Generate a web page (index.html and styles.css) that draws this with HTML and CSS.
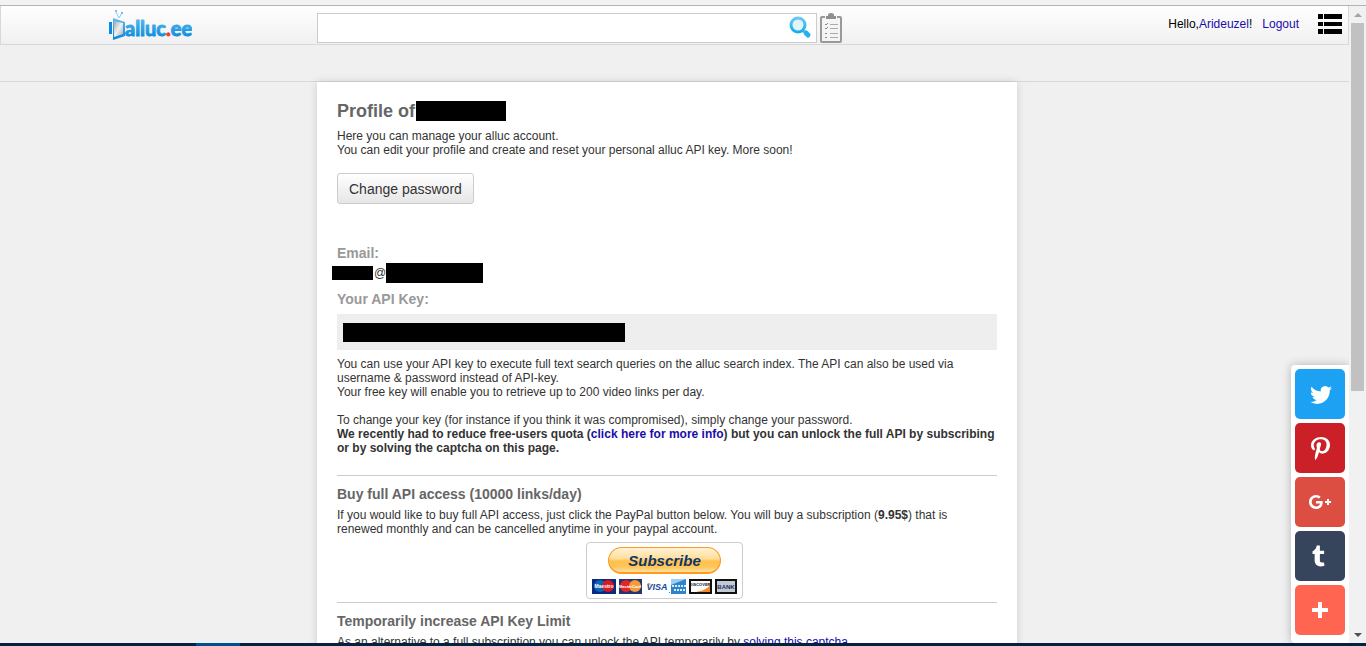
FILE: index.html
```html
<!DOCTYPE html>
<html lang="en">
<head>
<meta charset="UTF-8">
<meta name="viewport" content="width=device-width, initial-scale=1.0">
<title>alluc.ee - Profile</title>
<link rel="stylesheet" href="styles.css">
</head>
<body>

<div class="toolbar-edge"></div>

<div class="window">
    <div class="page">
        <header class="header">
            <a class="logo" href="#" aria-label="alluc.ee">
                <svg width="84" height="34" viewBox="0 0 84 34">
                    <defs>
                        <linearGradient id="blue" x1="0" y1="0" x2="0" y2="1">
                            <stop offset="0" stop-color="#5cc0f0"/>
                            <stop offset="1" stop-color="#0584da"/>
                        </linearGradient>
                        <linearGradient id="glass" x1="0" y1="0" x2="1" y2="1">
                            <stop offset="0" stop-color="#a4a8aa"/>
                            <stop offset="0.5" stop-color="#f0f0f0"/>
                            <stop offset="1" stop-color="#a5abaf"/>
                        </linearGradient>
                    </defs>
                    <path d="M1 14h3v12H1z" fill="#0a8be0"/>
                    <path d="M5 10l12 4v14L5 32z" fill="url(#blue)"/>
                    <path d="M6 13l9 2v11L6 29z" fill="url(#glass)"/>
                    <path d="M11 10L8 4M11 10l3-5" stroke="#8cc9ec" fill="none"/>
                    <circle cx="8" cy="3" r="1" fill="#45b0ea"/>
                    <circle cx="14" cy="5" r="1" fill="#45b0ea"/>
                    <text class="logo-text" x="17" y="28" fill="url(#blue)" stroke="url(#blue)">alluc<tspan fill="#f0402c" stroke="#f0402c">.</tspan>ee</text>
                </svg>
            </a>
            <form class="search">
                <div class="search-box">
                    <input type="text" class="search-input" aria-label="Search">
                    <button type="button" class="icon-button" aria-label="Search">
                        <svg width="24" height="24" viewBox="0 0 24 24">
                            <defs>
                                <linearGradient id="lens" x1="0" y1="0" x2="0" y2="1">
                                    <stop offset="0" stop-color="#6cc8f4"/>
                                    <stop offset="1" stop-color="#12aeea"/>
                                </linearGradient>
                            </defs>
                            <path d="M15 15l1 1" stroke="#9aa8b0" stroke-width="3"/>
                            <path d="M18 17l2 2" stroke="#1fb2ee" stroke-width="5" stroke-linecap="round"/>
                            <circle cx="10" cy="9" r="7" fill="#e4f3fa" stroke="url(#lens)" stroke-width="3"/>
                        </svg>
                    </button>
                </div>
                <button type="button" class="icon-button" aria-label="Lists">
                    <svg width="22" height="30" viewBox="0 0 22 30">
                        <rect x="1" y="4" width="20" height="25" rx="1" fill="#f4f4f4" stroke="#999" stroke-width="2"/>
                        <path d="M5 2h12v5H5z" fill="#f8f8f8"/>
                        <path d="M8 2a3 2 0 0 1 6 0v1h2v3H6V3h2z" fill="#8f8f8f"/>
                        <path d="M10 11.500h8M10 15.500h8M10 20.500h8M10 24.500h8" stroke="#aaa"/>
                        <path d="M5 11l1 1 2-2M5 15l1 1 2-2" stroke="#888" fill="none"/>
                        <path d="M5 20h2v1H5zM5 24h2v1H5z" fill="#888"/>
                    </svg>
                </button>
            </form>
            <nav class="user">
                <span>Hello,<a href="#">Arideuzel</a>!</span>
                <a href="#">Logout</a>
                <button type="button" class="icon-button menu" aria-label="Menu">
                    <svg width="24" height="20" viewBox="0 0 24 20">
                        <path d="M0 0h5v5H0zM6 0h18v5H6zM0 8h5v4H0zM6 8h18v4H6zM0 15h5v5H0zM6 15h18v5H6z"/>
                    </svg>
                </button>
            </nav>
        </header>
        <div class="subnav"></div>

        <main class="content">
            <section class="panel">
                <h1>Profile of<span class="redacted name"></span></h1>
                <p>Here you can manage your alluc account.<br>
                You can edit your profile and create and reset your personal alluc API key. More soon!</p>
                <button type="button" class="button">Change password</button>

                <h2 class="label">Email:</h2>
                <div class="email"><span class="redacted user-part"></span>@<span class="redacted domain-part"></span></div>
                <h2 class="label">Your API Key:</h2>
                <div class="api-key"><span class="redacted key"></span></div>
                <p>You can use your API key to execute full text search queries on the alluc search index. The API can also be used via username &amp; password instead of API-key.<br>
                Your free key will enable you to retrieve up to 200 video links per day.<br><br>
                To change your key (for instance if you think it was compromised), simply change your password.<br>
                <b>We recently had to reduce free-users quota (<a href="#">click here for more info</a>) but you can unlock the full API by subscribing or by solving the captcha on this page.</b></p>

                <hr class="first">
                <h2>Buy full API access (10000 links/day)</h2>
                <p>If you would like to buy full API access, just click the PayPal button below. You will buy a subscription (<b>9.95$</b>) that is<br>
                renewed monthly and can be cancelled anytime in your paypal account.</p>
                <button type="button" class="paypal">
                    <span class="subscribe">Subscribe</span>
                    <svg width="145" height="15" viewBox="0 0 145 15">
                        <rect width="24" height="15" fill="#0b2b80"/>
                        <circle cx="8" cy="7" r="6" fill="#0e65b0"/>
                        <circle cx="16" cy="7" r="6" fill="#d91920"/>
                        <text class="card" x="12" y="9" fill="#fff">Maestro</text>
                        <rect x="27" width="23" height="15" fill="#24356f"/>
                        <circle cx="34" cy="7" r="6" fill="#e1252b"/>
                        <circle cx="43" cy="7" r="6" fill="#f39a3b"/>
                        <text class="card small" x="38" y="9" fill="#fff">MasterCard</text>
                        <text class="visa" x="65" y="11" fill="#17479b">VISA</text>
                        <path d="M55 4h3l1 3z" fill="#f2a43a"/>
                        <rect x="79" width="15" height="15" fill="#2f83c9"/>
                        <path d="M79 0h15L79 6z" fill="#9ecdf0"/>
                        <path d="M80 7h14M82 11h12" stroke="#d5ebfa" stroke-width="2" stroke-dasharray="2 1"/>
                        <path d="M77 13h1v1h-1z" fill="#2f83c9"/>
                        <rect x="98" y="1" width="21" height="13" fill="#fff" stroke="#111" stroke-width="2"/>
                        <path d="M118 6v7h-14c6-1 11-3 14-7z" fill="#f08a2c"/>
                        <text class="card small" x="108" y="7" fill="#111">DISCOVER</text>
                        <rect x="124" y="1" width="20" height="13" fill="#c3c9d1" stroke="#111" stroke-width="2"/>
                        <text class="bank" x="134" y="10" fill="#17305f">BANK</text>
                    </svg>
                </button>

                <hr>
                <h2>Temporarily increase API Key Limit</h2>
                <p>As an alternative to a full subscription you can unlock the API temporarily by <a class="underlined" href="#">solving this captcha</a></p>
            </section>
        </main>

        <aside class="share">
            <a class="twitter" href="#" aria-label="Twitter"><svg viewBox="0 0 32 32"><path d="M27.996 10.116c-.81.36-1.68.602-2.592.71a4.526 4.526 0 0 0 1.984-2.496 9.037 9.037 0 0 1-2.866 1.095 4.513 4.513 0 0 0-7.69 4.116 12.81 12.81 0 0 1-9.3-4.715 4.49 4.49 0 0 0-.612 2.27 4.51 4.51 0 0 0 2.008 3.755 4.495 4.495 0 0 1-2.044-.564v.057a4.515 4.515 0 0 0 3.62 4.425 4.52 4.52 0 0 1-2.04.077 4.517 4.517 0 0 0 4.217 3.134 9.055 9.055 0 0 1-5.604 1.93A9.18 9.18 0 0 1 6 23.85a12.773 12.773 0 0 0 6.918 2.027c8.3 0 12.84-6.876 12.84-12.84 0-.195-.005-.39-.014-.583a9.172 9.172 0 0 0 2.252-2.336"/></svg></a>
            <a class="pinterest" href="#" aria-label="Pinterest"><svg viewBox="0 0 32 32"><path d="M7 13.252c0 1.81.772 4.45 2.895 5.045.074.014.178.04.252.04.49 0 .772-1.27.772-1.63 0-.428-1.174-1.34-1.174-3.123 0-3.705 3.028-6.33 6.947-6.33 3.37 0 5.863 1.782 5.863 5.058 0 2.446-1.054 7.035-4.468 7.035-1.232 0-2.286-.83-2.286-2.018 0-1.742 1.307-3.43 1.307-5.225 0-1.092-.67-1.977-1.916-1.977-1.692 0-2.732 1.77-2.732 3.165 0 .774.104 1.63.476 2.336-.683 2.736-2.08 6.814-2.08 9.633 0 .87.135 1.728.224 2.6l.134.137.207-.07c2.494-3.178 2.405-3.8 3.533-7.96.61 1.077 2.182 1.658 3.43 1.658 5.254 0 7.614-4.77 7.614-9.067C26 7.987 21.755 5 17.094 5 12.017 5 7 8.15 7 13.252z"/></svg></a>
            <a class="google" href="#" aria-label="Google+"><svg viewBox="0 0 32 32"><path d="M12 15v2.4h3.97c-.16 1.03-1.2 3.02-3.97 3.02-2.39 0-4.34-1.98-4.34-4.42s1.95-4.42 4.34-4.42c1.36 0 2.27.58 2.79 1.08l1.9-1.83C15.47 9.69 13.89 9 12 9c-3.87 0-7 3.13-7 7s3.13 7 7 7c4.04 0 6.72-2.84 6.72-6.84 0-.46-.05-.81-.11-1.16H12zm15 0h-2v-2h-2v2h-2v2h2v2h2v-2h2v-2z"/></svg></a>
            <a class="tumblr" href="#" aria-label="Tumblr"><svg viewBox="0 0 32 32"><path d="M19.59 22.176c-.392.186-1.14.348-1.695.362-1.682.045-2.008-1.18-2.022-2.07v-6.54h4.218v-3.18H15.89V5.403h-3.076c-.05 0-.138.044-.15.157-.18 1.636-.947 4.51-4.133 5.66v2.71h2.124v6.862c0 2.35 1.733 5.688 6.308 5.61 1.544-.028 3.258-.674 3.637-1.23l-1.01-2.996"/></svg></a>
            <a class="more" href="#" aria-label="More"><svg viewBox="0 0 32 32"><path d="M18 14V8h-4v6H8v4h6v6h4v-6h6v-4h-6z"/></svg></a>
        </aside>
    </div>

    <div class="scrollbar">
        <svg width="17" height="17" viewBox="0 0 17 17"><path d="M5 11l4-4 4 4z" fill="#a3a3a3"/></svg>
        <div class="track"><div class="thumb"></div></div>
        <svg width="17" height="17" viewBox="0 0 17 17"><path d="M5 7h8l-4 4z" fill="#505050"/></svg>
    </div>
</div>

<div class="taskbar"><div class="task"></div></div>

</body>
</html>
```

FILE: styles.css
```css
body {
    font-family: Arial, "Liberation Sans", sans-serif;
    font-size: 12px;
    line-height: 14px;
    color: #333;
    background-color: #f0f0f0;
    margin: 0;
    height: 100vh;
    display: flex;
    flex-direction: column;
    overflow: hidden;
}

a {
    color: #1a0dab;
    text-decoration: none;
}

svg {
    display: block;
}

.toolbar-edge {
    height: 5px;
    flex-shrink: 0;
    background-color: #f2f2f2;
    border-bottom: 1px solid #b4b4b4;
}

.window {
    flex: 1;
    min-height: 0;
    display: flex;
}

.page {
    flex: 1;
    position: relative;
    overflow: hidden;
}

/* header */
.header {
    display: grid;
    grid-template-columns: 316fr 700px 331fr;
    align-items: center;
    height: 38px;
    border: 1px solid #d8d8d8;
    border-top: none;
    background: linear-gradient(#fff, #f0f0f0);
}

.logo {
    justify-self: start;
    margin-left: 34%;
}

.logo-text {
    font-family: Lato, sans-serif;
    font-size: 20px;
    font-weight: bold;
    stroke-linejoin: round;
}

.search {
    display: flex;
    align-items: center;
    gap: 3px;
    margin-top: 6px;
}

.search-box {
    display: flex;
    align-items: center;
    box-sizing: border-box;
    width: 500px;
    height: 30px;
    padding-right: 4px;
    background-color: #fff;
    border: 1px solid #ccc;
}

.search-input {
    flex: 1;
    border: none;
    outline: none;
    background: none;
}

.icon-button {
    padding: 0;
    border: none;
    background: none;
    cursor: pointer;
}

.user {
    display: flex;
    justify-content: flex-end;
    align-items: center;
    gap: 10px;
    padding: 0 6px 2px 0;
    color: #000;
}

.menu {
    margin-left: 9px;
}

.subnav {
    height: 36px;
    border-bottom: 1px solid #d8d8d8;
}

/* profile */
.content {
    display: grid;
    grid-template-columns: 317fr 700px 332fr;
}

.panel {
    grid-column: 2;
    box-sizing: border-box;
    padding: 19px 20px;
    background-color: #fff;
    box-shadow: 0 0 8px rgba(0, 0, 0, 0.15);
}

h1 {
    display: flex;
    align-items: center;
    height: 20px;
    margin: 0 0 8px;
    font-size: 18px;
    line-height: 22px;
    color: #666;
}

h2 {
    margin: 0 0 6px;
    font-size: 14px;
    line-height: 16px;
    color: #666;
}

h2.label {
    margin: 8px 0 2px;
    color: #999;
}

p {
    margin: 0;
}

hr {
    margin: 3px 0 10px;
    border: none;
    border-top: 1px solid #ccc;
}

hr.first {
    margin-top: 20px;
}

.redacted {
    background-color: #000;
}

.name {
    width: 90px;
    height: 20px;
    margin-left: 1px;
}

.button {
    display: block;
    margin: 16px 0 41px;
    padding: 7px 11px 5px;
    font-family: inherit;
    font-size: 14px;
    line-height: 17px;
    color: #333;
    background: linear-gradient(#fff, #e6e6e6);
    border: 1px solid #ccc;
    border-radius: 3px;
    cursor: pointer;
}

.email {
    display: flex;
    align-items: center;
    height: 20px;
    margin-left: -5px;
    line-height: 22px;
}

.user-part {
    width: 41px;
    height: 14px;
    margin-right: 1px;
}

.domain-part {
    width: 97px;
    height: 20px;
}

.api-key {
    display: flex;
    align-items: center;
    height: 36px;
    margin: 7px 0;
    padding-left: 6px;
    background-color: #eee;
}

.key {
    width: 282px;
    height: 19px;
}

.paypal {
    display: flex;
    flex-direction: column;
    align-items: center;
    gap: 5px;
    margin: 6px 0 0 249px;
    padding: 4px 5px;
    background-color: #fff;
    border: 1px solid #ccc;
    border-radius: 4px;
    cursor: pointer;
}

.subscribe {
    box-sizing: border-box;
    width: 113px;
    height: 27px;
    border: 1px solid #ff9a1f;
    border-bottom-width: 2px;
    border-radius: 14px;
    background: linear-gradient(#fff3d9, #ffdd98 45%, #ffc04c 55%, #ffc65c 80%, #ffe2a0);
    font: italic bold 15px/25px Arial, "Liberation Sans", sans-serif;
    color: #0f3467;
}

.card {
    font-size: 5px;
    font-weight: bold;
    text-anchor: middle;
}

.small {
    font-size: 4px;
}

.visa {
    font-size: 9px;
    font-weight: bold;
    font-style: italic;
    text-anchor: middle;
}

.bank {
    font-size: 6px;
    font-weight: bold;
    text-anchor: middle;
}

.underlined {
    text-decoration: underline;
}

/* share buttons over the page */
.share {
    position: absolute;
    right: 0;
    bottom: 0;
    display: flex;
    flex-direction: column;
    gap: 4px;
    padding: 4px 4px 8px;
    background-color: #fff;
    border-radius: 4px 0 0 4px;
    box-shadow: 0 0 10px rgba(0, 0, 0, 0.25);
}

.share a {
    display: flex;
    align-items: center;
    justify-content: center;
    width: 50px;
    height: 50px;
    border-radius: 5px;
}

.share svg {
    width: 32px;
    height: 32px;
    fill: #fff;
}

.twitter {
    background-color: #1da1f2;
}

.pinterest {
    background-color: #cb2027;
}

.google {
    background-color: #dc4e41;
}

.tumblr {
    background-color: #37455c;
}

.more {
    background-color: #ff6550;
}

.scrollbar {
    display: flex;
    flex-direction: column;
    width: 17px;
    background-color: #f1f1f1;
}

.track {
    flex: 1;
    padding: 0 2px;
}

.thumb {
    height: 61%;
    background-color: #c1c1c1;
}

.taskbar {
    flex-shrink: 0;
    height: 3px;
    padding-left: 196px;
    background-color: #00233f;
}

.task {
    width: 44px;
    height: 3px;
    background-color: #004f8c;
}
```
